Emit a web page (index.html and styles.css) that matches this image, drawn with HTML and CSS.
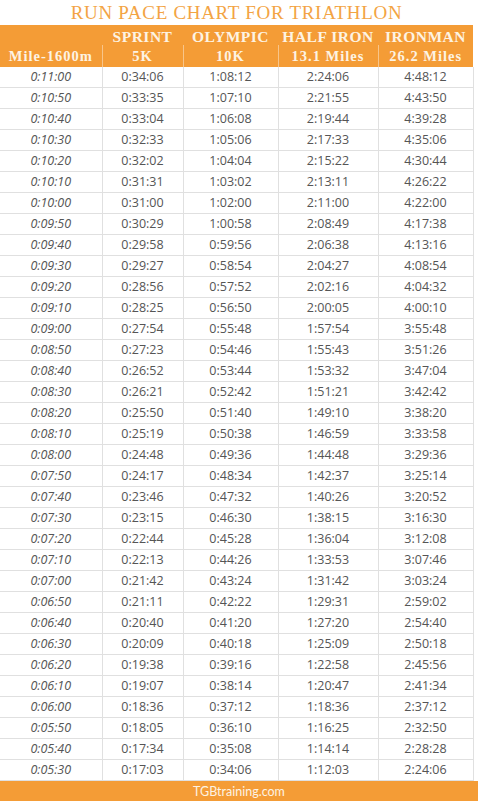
FILE: index.html
```html
<!DOCTYPE html>
<html>
<head>
<meta charset="utf-8">
<link rel="stylesheet" href="styles.css">
</head>
<body>
<div class="page">
  <h1 class="title">RUN PACE CHART FOR TRIATHLON</h1>
  <table class="chart">
    <thead>
      <tr class="head1">
        <th></th><th>SPRINT</th><th>OLYMPIC</th><th>HALF IRON</th><th>IRONMAN</th>
      </tr>
      <tr class="head2">
        <th>Mile-1600m</th><th>5K</th><th>10K</th><th>13.1 Miles</th><th>26.2 Miles</th>
      </tr>
    </thead>
    <tbody>
      <tr><td>0:11:00</td><td>0:34:06</td><td>1:08:12</td><td>2:24:06</td><td>4:48:12</td></tr>
      <tr><td>0:10:50</td><td>0:33:35</td><td>1:07:10</td><td>2:21:55</td><td>4:43:50</td></tr>
      <tr><td>0:10:40</td><td>0:33:04</td><td>1:06:08</td><td>2:19:44</td><td>4:39:28</td></tr>
      <tr><td>0:10:30</td><td>0:32:33</td><td>1:05:06</td><td>2:17:33</td><td>4:35:06</td></tr>
      <tr><td>0:10:20</td><td>0:32:02</td><td>1:04:04</td><td>2:15:22</td><td>4:30:44</td></tr>
      <tr><td>0:10:10</td><td>0:31:31</td><td>1:03:02</td><td>2:13:11</td><td>4:26:22</td></tr>
      <tr><td>0:10:00</td><td>0:31:00</td><td>1:02:00</td><td>2:11:00</td><td>4:22:00</td></tr>
      <tr><td>0:09:50</td><td>0:30:29</td><td>1:00:58</td><td>2:08:49</td><td>4:17:38</td></tr>
      <tr><td>0:09:40</td><td>0:29:58</td><td>0:59:56</td><td>2:06:38</td><td>4:13:16</td></tr>
      <tr><td>0:09:30</td><td>0:29:27</td><td>0:58:54</td><td>2:04:27</td><td>4:08:54</td></tr>
      <tr><td>0:09:20</td><td>0:28:56</td><td>0:57:52</td><td>2:02:16</td><td>4:04:32</td></tr>
      <tr><td>0:09:10</td><td>0:28:25</td><td>0:56:50</td><td>2:00:05</td><td>4:00:10</td></tr>
      <tr><td>0:09:00</td><td>0:27:54</td><td>0:55:48</td><td>1:57:54</td><td>3:55:48</td></tr>
      <tr><td>0:08:50</td><td>0:27:23</td><td>0:54:46</td><td>1:55:43</td><td>3:51:26</td></tr>
      <tr><td>0:08:40</td><td>0:26:52</td><td>0:53:44</td><td>1:53:32</td><td>3:47:04</td></tr>
      <tr><td>0:08:30</td><td>0:26:21</td><td>0:52:42</td><td>1:51:21</td><td>3:42:42</td></tr>
      <tr><td>0:08:20</td><td>0:25:50</td><td>0:51:40</td><td>1:49:10</td><td>3:38:20</td></tr>
      <tr><td>0:08:10</td><td>0:25:19</td><td>0:50:38</td><td>1:46:59</td><td>3:33:58</td></tr>
      <tr><td>0:08:00</td><td>0:24:48</td><td>0:49:36</td><td>1:44:48</td><td>3:29:36</td></tr>
      <tr><td>0:07:50</td><td>0:24:17</td><td>0:48:34</td><td>1:42:37</td><td>3:25:14</td></tr>
      <tr><td>0:07:40</td><td>0:23:46</td><td>0:47:32</td><td>1:40:26</td><td>3:20:52</td></tr>
      <tr><td>0:07:30</td><td>0:23:15</td><td>0:46:30</td><td>1:38:15</td><td>3:16:30</td></tr>
      <tr><td>0:07:20</td><td>0:22:44</td><td>0:45:28</td><td>1:36:04</td><td>3:12:08</td></tr>
      <tr><td>0:07:10</td><td>0:22:13</td><td>0:44:26</td><td>1:33:53</td><td>3:07:46</td></tr>
      <tr><td>0:07:00</td><td>0:21:42</td><td>0:43:24</td><td>1:31:42</td><td>3:03:24</td></tr>
      <tr><td>0:06:50</td><td>0:21:11</td><td>0:42:22</td><td>1:29:31</td><td>2:59:02</td></tr>
      <tr><td>0:06:40</td><td>0:20:40</td><td>0:41:20</td><td>1:27:20</td><td>2:54:40</td></tr>
      <tr><td>0:06:30</td><td>0:20:09</td><td>0:40:18</td><td>1:25:09</td><td>2:50:18</td></tr>
      <tr><td>0:06:20</td><td>0:19:38</td><td>0:39:16</td><td>1:22:58</td><td>2:45:56</td></tr>
      <tr><td>0:06:10</td><td>0:19:07</td><td>0:38:14</td><td>1:20:47</td><td>2:41:34</td></tr>
      <tr><td>0:06:00</td><td>0:18:36</td><td>0:37:12</td><td>1:18:36</td><td>2:37:12</td></tr>
      <tr><td>0:05:50</td><td>0:18:05</td><td>0:36:10</td><td>1:16:25</td><td>2:32:50</td></tr>
      <tr><td>0:05:40</td><td>0:17:34</td><td>0:35:08</td><td>1:14:14</td><td>2:28:28</td></tr>
      <tr><td>0:05:30</td><td>0:17:03</td><td>0:34:06</td><td>1:12:03</td><td>2:24:06</td></tr>
    </tbody>
  </table>
  <div class="footer">TGBtraining.com</div>
</div>
</body>
</html>
```
FILE: styles.css
```css
html, body {
  margin: 0;
  padding: 0;
  background: #ffffff;
}
.page {
  width: 478px;
  height: 801px;
  display: flex;
  flex-direction: column;
  overflow: hidden;
}
.title {
  margin: 0;
  height: 25px;
  width: 473px;
  font-family: "Liberation Serif", serif;
  font-weight: normal;
  font-size: 19px;
  line-height: 25px;
  letter-spacing: 0.7px;
  color: #f3a444;
  text-align: center;
}
.chart {
  width: 473px;
  border-collapse: collapse;
  table-layout: fixed;
}
.chart th:nth-child(1), .chart td:nth-child(1) { width: 102px; }
.chart th:nth-child(2), .chart td:nth-child(2) { width: 81px; }
.chart th:nth-child(3), .chart td:nth-child(3) { width: 95px; }
.chart th:nth-child(4), .chart td:nth-child(4) { width: 100px; }
.chart th:nth-child(5), .chart td:nth-child(5) { width: 95px; }
.chart thead th {
  background: #f49c36;
  color: #fdf3e3;
  font-family: "Liberation Serif", serif;
  font-weight: bold;
  padding: 0;
  text-align: center;
}
.head1 th {
  height: 17px;
  font-size: 15.5px;
  line-height: 17px;
  letter-spacing: 0.5px;
  vertical-align: top;
}
.chart thead .head1 th {
  padding-top: 3px;
}
.head2 th {
  height: 22px;
  font-size: 14.5px;
  line-height: 22px;
  letter-spacing: 1px;
}
.head2 th + th {
  border-left: 1px solid #f8c58a;
}
.chart td {
  height: 20px;
  padding: 0;
  border: 1px solid #e0e0e0;
  font-family: "Open Sans", sans-serif;
  font-size: 12.5px;
  line-height: 20px;
  color: #555555;
  text-align: center;
}
.chart td:first-child {
  font-style: italic;
  border-left: none;
}
.chart tr:first-child td { border-top: none; }
.footer {
  height: 21px;
  margin-top: auto;
  background: #f49c36;
  color: #fdf3e3;
  font-family: "Lato", sans-serif;
  font-size: 12.5px;
  line-height: 21px;
  text-align: center;
}
```
